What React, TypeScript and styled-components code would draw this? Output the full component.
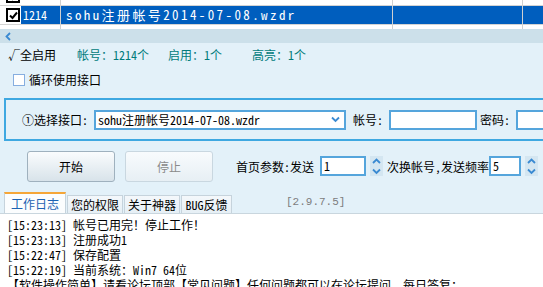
import styled, { createGlobalStyle } from 'styled-components'

const FONT = `"Noto Sans Mono CJK SC", "Noto Sans CJK SC", "Liberation Sans", sans-serif`

const GlobalStyle = createGlobalStyle`
    html, body {
        margin: 0;
        padding: 0;
        background: #e3f1f9;
    }
    body {
        font-family: ${FONT};
        font-size: 12px;
        color: #000;
    }
`

const rows = [
    { id: '', name: '', check: true, selected: false },
    { id: '1214', name: 'sohu注册帐号2014-07-08.wzdr', check: true, selected: true },
    { id: '', name: '', check: false, selected: false },
]

const logs = [
    '[15:23:13] 帐号已用完！停止工作！',
    '[15:23:13] 注册成功1',
    '[15:22:47] 保存配置',
    '[15:22:19] 当前系统：Win7 64位',
    '【软件操作简单】请看论坛顶部【常见问题】任何问题都可以在论坛提问，每日答复：',
]

const tabs = [
    { label: '工作日志', width: 62 },
    { label: '您的权限', width: 56 },
    { label: '关于神器', width: 56 },
    { label: 'BUG反馈', width: 51 },
]

const Check = () => (
    <svg width="9" height="9" viewBox="0 0 9 9">
        <path d="M1 4.5 L3.5 7 L8 1.5" stroke="#000" strokeWidth="2" fill="none" />
    </svg>
)

const Chevron = ({ dir }: { dir: 'up' | 'down' | 'left' }) => {
    const d = dir === 'up' ? 'M1 5 L4.5 1.5 L8 5' : dir === 'down' ? 'M1 1.5 L4.5 5 L8 1.5' : 'M5 1 L1.5 4.5 L5 8'
    const w = dir === 'left' ? 7 : 9
    const h = dir === 'left' ? 9 : 7
    return (
        <svg width={w} height={h} viewBox={`0 0 ${w} ${h}`}>
            <path d={d} stroke="#3a8ad2" strokeWidth="1.8" fill="none" />
        </svg>
    )
}

const Spinner = () => (
    <SpinBox>
        <Chevron dir="up" />
        <Chevron dir="down" />
    </SpinBox>
)

const App = () => {
    return (
        <Window>
            <GlobalStyle />
            <ListView>
                <ListInner>
                    {rows.map((r, i) => (
                        <Row key={i}>
                            <CheckCell>
                                {r.check && <RowCheck><Check /></RowCheck>}
                            </CheckCell>
                            <Cell $selected={r.selected}>{r.id}</Cell>
                            <NameCell $selected={r.selected}>{r.name}</NameCell>
                            <Cell $selected={r.selected} />
                            <Cell $selected={r.selected} />
                        </Row>
                    ))}
                </ListInner>
            </ListView>
            <HScroll>
                <Chevron dir="left" />
            </HScroll>
            <StatusBar>
                <span>√全启用</span>
                <Teal>帐号：1214个</Teal>
                <Teal>启用：1个</Teal>
                <Teal>高亮：1个</Teal>
            </StatusBar>
            <LoopRow>
                <Box />
                <span>循环使用接口</span>
            </LoopRow>
            <GroupBox>
                <FieldLabel>①选择接口:</FieldLabel>
                <Select>
                    <span>sohu注册帐号2014-07-08.wzdr</span>
                    <Chevron dir="down" />
                </Select>
                <FieldLabel>帐号:</FieldLabel>
                <TextInput $width={88} />
                <FieldLabel>密码:</FieldLabel>
                <TextInput $width={60} />
            </GroupBox>
            <Controls>
                <Button>开始</Button>
                <Button $disabled>停止</Button>
                <ParamText>首页参数:发送</ParamText>
                <NumInput $width={46}>1</NumInput>
                <Spinner />
                <Plain>次换帐号,发送频率</Plain>
                <NumInput $width={32}>5</NumInput>
                <Spinner />
            </Controls>
            <TabStrip>
                {tabs.map((t, i) => (
                    <Tab key={t.label} $active={i === 0} $width={t.width}>
                        {t.label}
                    </Tab>
                ))}
                <Version>[2.9.7.5]</Version>
            </TabStrip>
            <Log>
                {logs.map((l, i) => (
                    <LogLine key={i}>{l}</LogLine>
                ))}
            </Log>
        </Window>
    )
}

export default App

const Window = styled.div`
    width: 543px;
    height: 287px;
    overflow: hidden;
    display: flex;
    flex-direction: column;
    background: #e3f1f9;
`

const ListView = styled.div`
    height: 29px;
    overflow: hidden;
    background: #fff;
    flex-shrink: 0;
`

const ListInner = styled.div`
    margin-top: -13px;
`

const Row = styled.div`
    display: grid;
    grid-template-columns: 21px 40px 332px 130px 40px;
    height: 19px;
    border-bottom: 1px solid #d3d3d3;
    box-sizing: border-box;
`

const CheckCell = styled.div`
    display: flex;
    align-items: center;
    padding-left: 6px;
    background: #fff;
`

const RowCheck = styled.div`
    width: 10px;
    height: 10px;
    border: 2px solid #000;
    background: #fff;
    display: flex;
    align-items: center;
    justify-content: center;
`

const Cell = styled.div<{ $selected?: boolean }>`
    background: ${(p) => (p.$selected ? '#005ebe' : '#fff')};
    color: ${(p) => (p.$selected ? '#fff' : '#000')};
    border-right: 1px solid #d0d0d0;
    padding-left: 2px;
    line-height: 18px;
    white-space: nowrap;
    overflow: hidden;
`

const NameCell = styled(Cell)`
    padding-left: 5px;
    font-size: 13px;
    letter-spacing: 2.4px;
`

const HScroll = styled.div`
    height: 14px;
    background: #cce0ea;
    display: flex;
    align-items: center;
    padding-left: 5px;
    flex-shrink: 0;
`

const StatusBar = styled.div`
    height: 24px;
    display: grid;
    grid-template-columns: 69px 91px 84px auto;
    align-items: center;
    padding-left: 8px;
    line-height: 14px;
    flex-shrink: 0;
`

const Teal = styled.span`
    color: #007b7b;
`

const LoopRow = styled.div`
    height: 25px;
    display: flex;
    align-items: center;
    gap: 4px;
    padding-left: 13px;
    flex-shrink: 0;
`

const Box = styled.div`
    width: 10px;
    height: 10px;
    border: 1px solid #86aee0;
    background: #fff;
`

const GroupBox = styled.div`
    margin: 6px 0 0 4px;
    width: 560px;
    height: 43px;
    box-sizing: border-box;
    border: 2px solid #3ea8e1;
    border-right: none;
    display: flex;
    align-items: center;
    padding-left: 16px;
    flex-shrink: 0;
`

const FieldLabel = styled.span`
    margin-right: 6px;
    margin-left: 6px;
    white-space: nowrap;
    flex-shrink: 0;
    &:first-child {
        margin-left: 0;
    }
`

const Select = styled.div`
    width: 252px;
    height: 20px;
    box-sizing: border-box;
    border: 2px solid #55a5dc;
    background: #fff;
    display: flex;
    align-items: center;
    justify-content: space-between;
    padding: 0 4px 0 2px;
    white-space: nowrap;
    margin-right: 1px;
    flex-shrink: 0;
`

const TextInput = styled.div<{ $width: number }>`
    width: ${(p) => p.$width}px;
    height: 20px;
    box-sizing: border-box;
    border: 2px solid #55a5dc;
    background: #fff;
    flex-shrink: 0;
    margin-right: -3px;
`

const Controls = styled.div`
    height: 50px;
    display: flex;
    align-items: center;
    padding-left: 27px;
    flex-shrink: 0;
    white-space: nowrap;
`

const Button = styled.div<{ $disabled?: boolean }>`
    width: 88px;
    height: 31px;
    box-sizing: border-box;
    display: flex;
    align-items: center;
    justify-content: center;
    margin-right: 10px;
    border-radius: 3px;
    flex-shrink: 0;
    border: 1px solid ${(p) => (p.$disabled ? '#c9d7e0' : '#9fb1be')};
    background: ${(p) =>
        p.$disabled
            ? 'linear-gradient(#f8fbfd, #e7eff4)'
            : 'linear-gradient(#fafcfd, #d8e3ea)'};
    color: ${(p) => (p.$disabled ? '#8a8a8a' : '#000')};
`

const ParamText = styled.span`
    margin-left: 13px;
    margin-right: 6px;
`

const Plain = styled.span`
    flex-shrink: 0;
`

const NumInput = styled.div<{ $width: number }>`
    width: ${(p) => p.$width}px;
    height: 20px;
    box-sizing: border-box;
    border: 2px solid #55a5dc;
    background: #fff;
    padding-left: 2px;
    line-height: 16px;
    margin-right: 4px;
    flex-shrink: 0;
`

const SpinBox = styled.div`
    width: 13px;
    height: 20px;
    background: #d4e6f1;
    display: flex;
    flex-direction: column;
    align-items: center;
    justify-content: space-around;
    margin-right: 4px;
    flex-shrink: 0;
`

const TabStrip = styled.div`
    height: 22px;
    display: flex;
    align-items: flex-end;
    gap: 1px;
    padding-left: 4px;
    border-bottom: 1px solid #c9d6de;
    flex-shrink: 0;
`

const Tab = styled.div<{ $active?: boolean; $width: number }>`
    width: ${(p) => p.$width}px;
    height: ${(p) => (p.$active ? '21px' : '18px')};
    box-sizing: border-box;
    display: flex;
    align-items: center;
    justify-content: center;
    white-space: nowrap;
    border: 1px solid #c6d3dc;
    border-bottom: none;
    border-top: ${(p) => (p.$active ? '2px solid #f5a638' : '1px solid #c6d3dc')};
    background: ${(p) => (p.$active ? '#fbfdfe' : 'linear-gradient(#f4f8fb, #e6eff5)')};
    color: ${(p) => (p.$active ? '#1d63b3' : '#000')};
`

const Version = styled.span`
    margin-left: 53px;
    align-self: center;
    color: #7d7d7d;
    font-family: "Liberation Mono", monospace;
    font-size: 11px;
`

const Log = styled.div`
    flex: 1;
    background: #fff;
    padding: 3px 0 0 7px;
    overflow: hidden;
`

const LogLine = styled.div`
    line-height: 15px;
    white-space: nowrap;
`
